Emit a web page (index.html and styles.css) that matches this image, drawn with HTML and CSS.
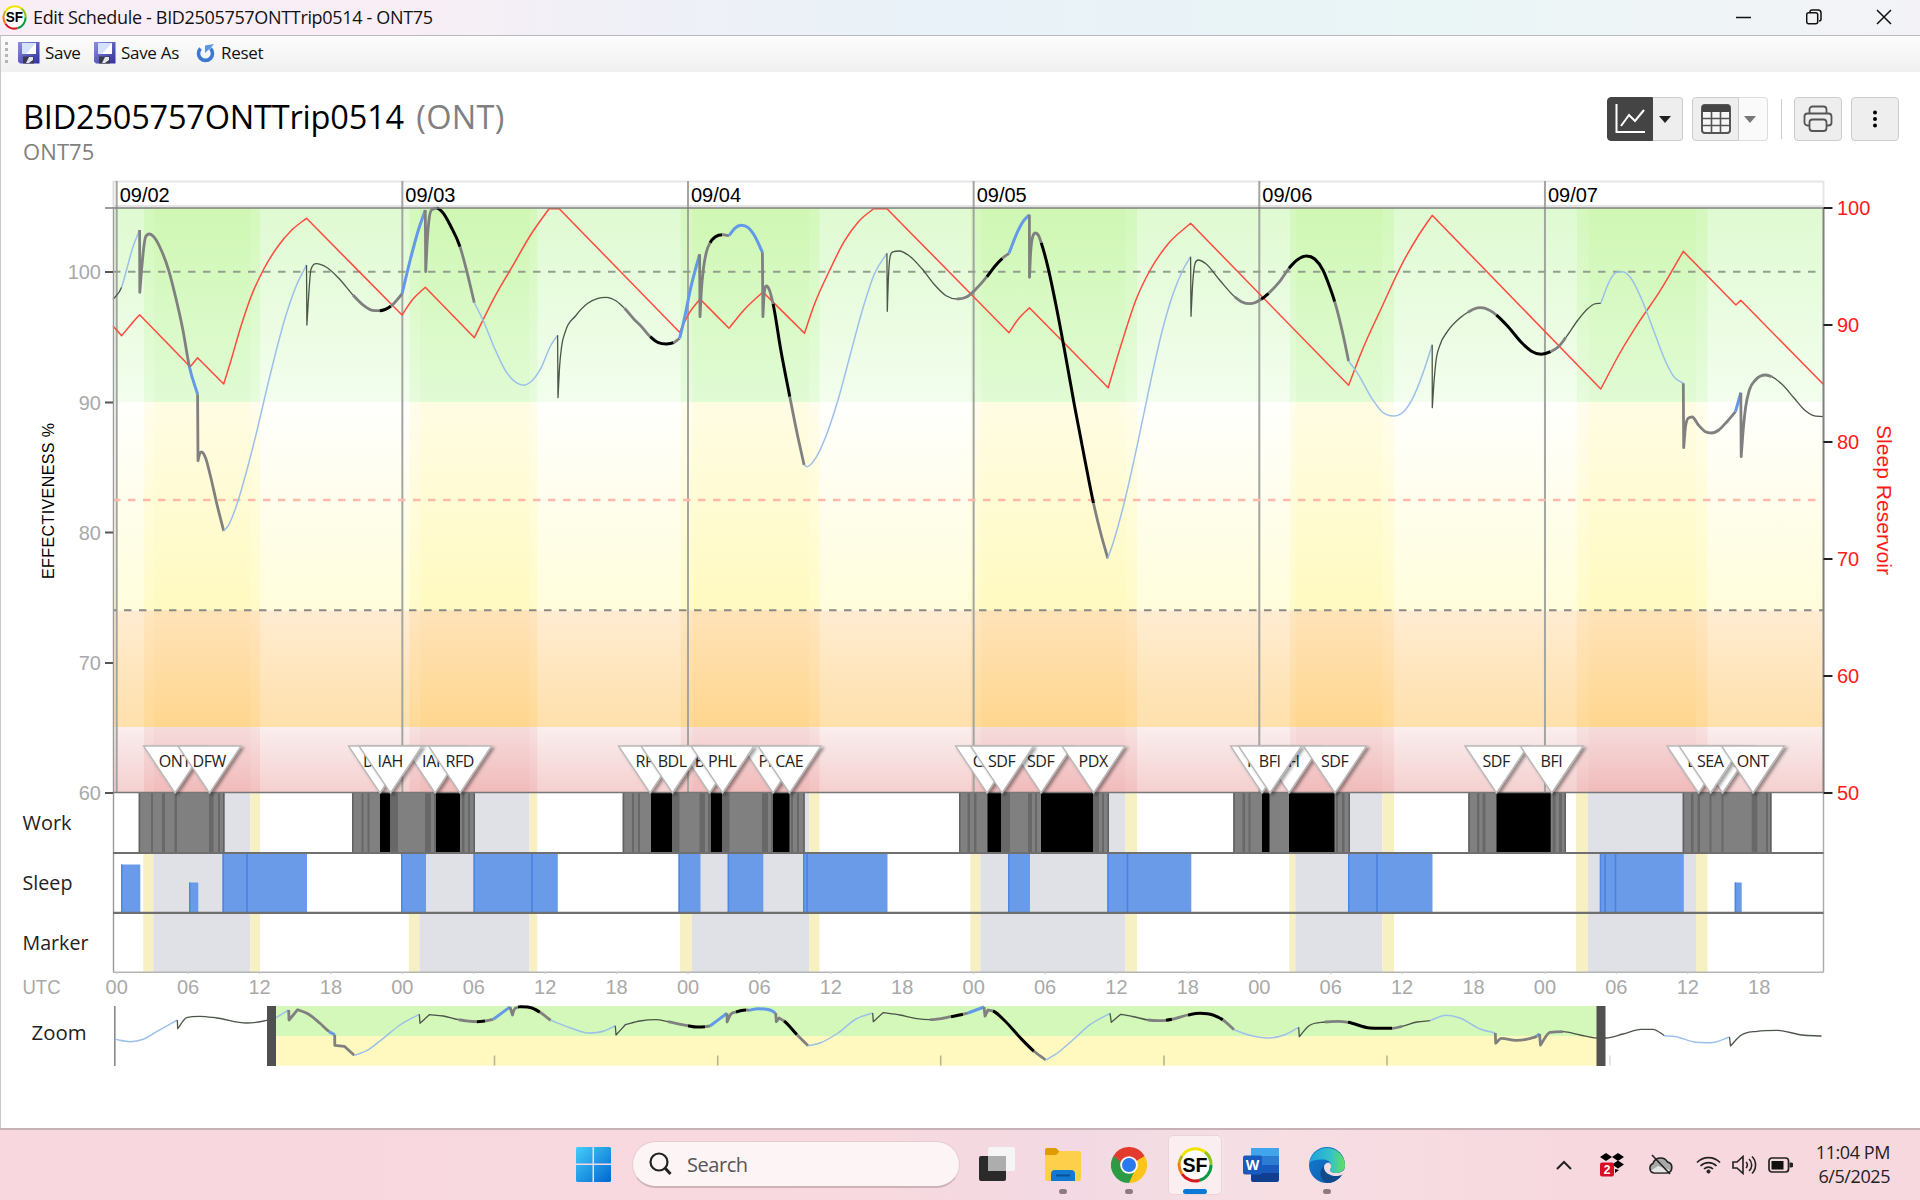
FILE: index.html
```html
<!DOCTYPE html>
<html lang="en">
<head>
<meta charset="utf-8">
<title>Edit Schedule - BID2505757ONTTrip0514 - ONT75</title>
<link rel="stylesheet" href="styles.css">
</head>
<body>
<svg class="defs" width="0" height="0">
  <defs>
    <symbol id="sf" viewBox="0 0 36 36">
      <circle cx="18" cy="18" r="17.5" fill="#fff"/>
      <g fill="none" stroke-width="3">
        <path d="M5 9A16 16 0 0 1 28 5" stroke="#f2e400"/>
        <path d="M28 5A16 16 0 0 1 34 18" stroke="#8fc31f"/>
        <path d="M34 18A16 16 0 0 1 22 33.500" stroke="#0a9a44"/>
        <path d="M22 33.500A16 16 0 0 1 5 27" stroke="#d9161c"/>
        <path d="M5 27A16 16 0 0 1 2.200 16" stroke="#ee7d1a"/>
        <path d="M2.200 16A16 16 0 0 1 5 9" stroke="#b8b414"/>
      </g>
      <text x="18" y="25" class="sf-text" text-anchor="middle" textLength="25" lengthAdjust="spacingAndGlyphs">SF</text>
    </symbol>
    <linearGradient id="disk" x1="0" y1="0" x2="1" y2="1">
      <stop offset="0" stop-color="#8f8fe0"/><stop offset="1" stop-color="#30309a"/>
    </linearGradient>
    <symbol id="floppy" viewBox="0 0 22 22">
      <path d="M0 0H21.500V21.500H2L0 19.500Z" fill="url(#disk)"/>
      <rect x="4" y="1" width="14" height="11" fill="#d4e2fb"/>
      <path d="M18 1V12H8z" fill="#fff"/>
      <rect x="5" y="14.500" width="11" height="7" fill="#3a3a4a"/>
      <path d="M11 15h4v3l-4 3h-3z" fill="#dfe4ee"/>
    </symbol>
  </defs>
</svg>

<header class="titlebar">
  <svg class="app-icon" width="25" height="25"><use href="#sf"/></svg>
  <span class="title">Edit Schedule - BID2505757ONTTrip0514 - ONT75</span>
  <div class="win-controls">
    <svg width="16" height="16"><path d="M0 8.500H15" /></svg>
    <svg width="16" height="16"><rect x=".7" y="3.700" width="11" height="11" rx="2"/><path d="M4 3.500V3a2 2 0 0 1 2-2h6a3 3 0 0 1 3 3v6a2 2 0 0 1-2 2"/></svg>
    <svg width="16" height="16"><path d="M1 1L15 15M15 1L1 15"/></svg>
  </div>
</header>

<nav class="toolbar">
  <span class="grip"></span>
  <button class="tool save"><svg width="22" height="22"><use href="#floppy"/></svg>Save</button>
  <button class="tool save-as"><svg width="22" height="22"><use href="#floppy"/></svg>Save As</button>
  <button class="tool reset"><svg width="19" height="20" viewBox="0 0 19 20"><path d="M4.500 5.500A7 7 0 1 0 14.500 5.500" fill="none" stroke="#3c78cf" stroke-width="3.600"/><path d="M9 10V2.500L18 1l-3 3.500z" fill="#5a96e4"/></svg>Reset</button>
</nav>

<main class="content">
  <section class="heading">
    <div>
      <h1><span class="name">BID2505757ONTTrip0514</span> <span class="base">(ONT)</span></h1>
      <p class="scenario">ONT75</p>
    </div>
    <div class="actions">
      <div class="split">
        <button class="btn dark"><svg width="32" height="32" viewBox="0 0 32 32"><path d="M2.500 1V29H31M7 23l8-11 6 6 9-11" fill="none" stroke="#fff" stroke-width="2"/></svg></button>
        <button class="btn caret"><svg width="12" height="7"><path d="M0 0H12L6 7z" fill="#222"/></svg></button>
      </div>
      <div class="split">
        <button class="btn table"><svg width="30" height="30" viewBox="0 0 30 30"><rect x="1" y="1" width="28" height="28" rx="3" fill="#f6f6f6" stroke="#555" stroke-width="2"/><path d="M1 8V4a3 3 0 0 1 3-3H26a3 3 0 0 1 3 3V8z" fill="#444"/><path d="M1 14.500H29M1 21.500H29M10.500 8V29M19.500 8V29" stroke="#555" stroke-width="1.600"/></svg></button>
        <button class="btn caret faded"><svg width="12" height="7"><path d="M0 0H12L6 7z" fill="#777"/></svg></button>
      </div>
      <span class="divider"></span>
      <button class="btn single"><svg width="30" height="28" viewBox="0 0 30 28" fill="#eee" stroke="#555" stroke-width="1.800"><path d="M6.500 9V4.500a3 3 0 0 1 3-3h11a3 3 0 0 1 3 3V9"/><rect x="1.500" y="8.500" width="27" height="12" rx="3"/><rect x="6.500" y="14.500" width="17" height="11.500" rx="3"/></svg></button>
      <button class="btn single"><svg width="6" height="18"><circle cx="3" cy="2.500" r="2"/><circle cx="3" cy="9" r="2"/><circle cx="3" cy="15.500" r="2"/></svg></button>
    </div>
  </section>

  <svg id="chart" class="chart" width="1920" height="953" viewBox="0 175 1920 953">
    <defs>
      <linearGradient id="g0" x2="0" y2="1"><stop offset="0" stop-color="#dffad2"/><stop offset="1" stop-color="#f3feee"/></linearGradient>
      <linearGradient id="g1" x2="0" y2="1"><stop offset="0" stop-color="#fffffd"/><stop offset="1" stop-color="#fffddb"/></linearGradient>
      <linearGradient id="g2" x2="0" y2="1"><stop offset="0" stop-color="#ffecd2"/><stop offset="1" stop-color="#ffe0ab"/></linearGradient>
      <linearGradient id="g3" x2="0" y2="1"><stop offset="0" stop-color="#faeeee"/><stop offset="1" stop-color="#f5cfcf"/></linearGradient>
      <linearGradient id="n0" x2="0" y2="1"><stop offset="0" stop-color="#cff7b3"/><stop offset="1" stop-color="#e1fbd5"/></linearGradient>
      <linearGradient id="n1" x2="0" y2="1"><stop offset="0" stop-color="#fffce4"/><stop offset="1" stop-color="#fffac0"/></linearGradient>
      <linearGradient id="n2" x2="0" y2="1"><stop offset="0" stop-color="#ffe3b8"/><stop offset="1" stop-color="#ffd68e"/></linearGradient>
      <linearGradient id="n3" x2="0" y2="1"><stop offset="0" stop-color="#f6dbdb"/><stop offset="1" stop-color="#f1baba"/></linearGradient>
      <filter id="shadow" x="-20%" y="-20%" width="150%" height="150%"><feDropShadow dx="2.500" dy="2" stdDeviation="1.500" flood-opacity=".38"/></filter>
    </defs>
  </svg>
</main>

<footer class="taskbar">
  <svg class="start" width="35" height="35"><defs><linearGradient id="win" x2="1" y2="1"><stop stop-color="#45cdfb"/><stop offset="1" stop-color="#0067cf"/></linearGradient></defs><path fill="url(#win)" d="M1 0H16.500V16.500H0V1zM18 0H34L35 1V16.500H18zM0 18H16.500V35H1L0 34zM18 18H35V34L34 35H18z"/></svg>
  <div class="search">
    <svg width="24" height="24"><circle cx="11" cy="10" r="8.500" fill="none" stroke="#222" stroke-width="2.200"/><path d="M17 16l5.500 6" stroke="#222" stroke-width="3"/></svg>
    <span>Search</span>
  </div>
  <div class="apps">
    <div class="app"><svg width="36" height="36"><rect y="9" width="27" height="25" rx="2" fill="#2a2a2a"/><rect x="9" y="0" width="27" height="24" rx="2" fill="#f5f5f5"/><rect x="9" y="9" width="18" height="15" fill="#adadad"/></svg></div>
    <div class="app run"><svg width="36" height="36"><path d="M0 3a2 2 0 0 1 2-2H11l4 4-4 4H0z" fill="#dd9d00"/><path d="M0 8H11l4-4H34a2 2 0 0 1 2 2V32a2 2 0 0 1-2 2H2a2 2 0 0 1-2-2z" fill="#fdcf4a"/><path d="M6 34V27a4 4 0 0 1 4-4H26a4 4 0 0 1 4 4V34z" fill="#1279d0"/><path d="M11 28.500H25" stroke="#0b4f94" stroke-width="2"/></svg></div>
    <div class="app run"><svg width="36" height="36" viewBox="0 0 36 36"><path d="M18 18L2.400 9A18 18 0 0 1 33.600 9z" fill="#e33b2e"/><path d="M18 18L18 36A18 18 0 0 1 2.400 9z" fill="#2b9b46"/><path d="M18 18L33.600 9A18 18 0 0 1 18 36z" fill="#fcc419"/><path d="M2.400 9L10.200 22.500 18 18zM33.600 9H18V18z" fill="#e33b2e"/><path d="M2.400 9L10.200 22.500 11 16z" fill="#2b9b46"/><path d="M25.800 22.500L18 36 14 26z" fill="#fcc419"/><path d="M10.200 22.500L18 36 23 25z" fill="#2b9b46"/><circle cx="18" cy="18" r="8.800" fill="#fff"/><circle cx="18" cy="18" r="7" fill="#2a79ee"/></svg></div>
    <div class="app active"><svg width="36" height="36"><use href="#sf"/></svg></div>
    <div class="app"><svg width="36" height="34"><rect x="8" width="28" height="34" rx="2" fill="#103f91"/><path d="M8 2a2 2 0 0 1 2-2H34a2 2 0 0 1 2 2V9H8z" fill="#41a5ee"/><rect x="8" y="8" width="28" height="9" fill="#2b7cd3"/><rect x="8" y="17" width="28" height="8" fill="#185abd"/><rect y="7.500" width="19" height="19" rx="2" fill="#185abd"/><text x="9.500" y="22" text-anchor="middle" class="word-text">W</text></svg></div>
    <div class="app run"><svg width="36" height="36" viewBox="0 0 36 36"><defs><linearGradient id="e1" x2="1"><stop stop-color="#1fa2e0"/><stop offset=".6" stop-color="#35c1c9"/><stop offset="1" stop-color="#62e25a"/></linearGradient><linearGradient id="e2" x2="1" y2="1"><stop stop-color="#0f7fd4"/><stop offset="1" stop-color="#0f56a8"/></linearGradient></defs><circle cx="18" cy="18" r="18" fill="url(#e2)"/><path d="M.3 16A18 18 0 0 1 36 18C36 24 31 26 27 26 22 26 20 24 21.500 21.500 23 19 22 13 15 12.500 9 12 3 13 .3 16z" fill="url(#e1)"/><path d="M15 19c-1 4 3 10 10 10 4 0 7-1.500 8.500-2.500C30 33 24 36 18 36c-7-2-9-13-3-17z" fill="#114a8b"/><path d="M15 20c0-3 3-5 5.500-4 2 1.500 2 4 1 5.500C20 24 22 26 27 26c4 0 8-1.500 9-5l0 4-2.500 2.500C31 29 27 29.500 23 28.500 18 27 15 24 15 20z" fill="#f3dce1"/></svg></div>
  </div>
  <div class="tray">
    <svg class="chevron" width="16" height="10"><path d="M1 9L8 2l7 7" fill="none" stroke="#222" stroke-width="2"/></svg>
    <svg class="dropbox" width="24" height="24"><path d="M6 0l6 4-6 4-6-4zM18 0l6 4-6 4-6-4zM18 7.500l6 4-6 4-6-4zM15 16l4 1-4 3z" fill="#000"/><rect y="9.500" width="14" height="14" rx="2" fill="#d80e26"/><text x="7" y="21" text-anchor="middle" class="badge">2</text></svg>
    <svg class="cloud" width="25" height="22"><path d="M6 19a5 5 0 0 1-1-9.500A8 8 0 0 1 19.500 8 5.600 5.600 0 0 1 19 19z" fill="#a9a9a9" stroke="#222" stroke-width="1.600"/><path d="M3 16.500l7-4.500 12 4-3 2.200H6z" fill="#e4e4e4"/><path d="M4 1L22 20" stroke="#222" stroke-width="1.600"/></svg>
    <svg class="wifi" width="25" height="19" fill="none" stroke="#222" stroke-width="1.700"><path d="M1 7.500a16 16 0 0 1 23 0M4.500 11a11.300 11.300 0 0 1 16 0M8 14a6.500 6.500 0 0 1 9 0"/><circle cx="12.500" cy="16.500" r="1.600" fill="#222" stroke-width="1"/></svg>
    <svg class="volume" width="25" height="20" fill="none" stroke="#222" stroke-width="1.600"><path d="M1 7H5L11 1.500V18.500L5 13H1zM14 7a4 4 0 0 1 0 6M17 4a8 8 0 0 1 0 12M20 1.500a12 12 0 0 1 0 17"/></svg>
    <svg class="battery" width="25" height="16"><rect x="1" y="1" width="19.500" height="14" rx="3" fill="none" stroke="#222" stroke-width="1.700"/><rect x="3.500" y="4" width="12" height="8.500" fill="#111"/><path d="M21.500 5.500h1.500a1.500 1.500 0 0 1 0 5h-1.500z" fill="#222"/></svg>
    <div class="clock"><span class="time">11:04 PM</span><span class="date">6/5/2025</span></div>
  </div>
</footer>
<script src="chart.js"></script>
</body>
</html>
```
FILE: styles.css
```css
* { box-sizing: border-box; }
body {
  margin: 0;
  width: 1920px;
  height: 1200px;
  overflow: hidden;
  display: flex;
  flex-direction: column;
  background: #fff;
  color: #111;
  font-family: "Open Sans", "Noto Sans", sans-serif;
}
button { font: inherit; letter-spacing: inherit; color: inherit; border: 0; background: none; padding: 0; }
svg { display: block; flex: none; }
.defs { position: absolute; }
.sf-text { font: 700 21px "Liberation Sans", Arial, sans-serif; fill: #000; }
.word-text { font: 700 14px "Open Sans", sans-serif; fill: #fff; }
.badge { font: 700 12px "Liberation Sans", sans-serif; fill: #fff; }

/* title bar */
.titlebar {
  height: 35px;
  display: flex;
  align-items: center;
  padding: 0 28px 1px 2px;
  background: linear-gradient(90deg, #f9eef5 0, #f9eef5 20%, #f0f0f7 32%, #e8f2f8 50%, #eaf5f6 75%, #f3f3f7 100%);
}
.title { margin-left: 6px; font-size: 18px; letter-spacing: -.33px; }
.win-controls { margin-left: auto; display: flex; gap: 54px; }
.win-controls svg { fill: none; stroke: #111; stroke-width: 1.5; }

/* toolbar */
.toolbar {
  height: 37px;
  display: flex;
  align-items: center;
  padding-bottom: 3px;
  border-top: 1px solid #bbb9c0;
  border-left: 1px solid #c8c8c8;
  background: linear-gradient(#fcfcfc, #f0f0f0);
  font-size: 17px;
  letter-spacing: -.15px;
}
.grip { width: 3px; height: 22px; margin-left: 4px; background: repeating-linear-gradient(#b5b5b5 0 3px, transparent 3px 6px); }
.tool { display: flex; align-items: center; gap: 5px; }
.save { margin-left: 10px; width: 62px; letter-spacing: -.3px; }
.save-as { margin-left: 14px; width: 89px; letter-spacing: -.3px; }
.reset { margin-left: 13px; gap: 6px; letter-spacing: -.3px; }

/* heading */
.content { flex: none; height: 1056px; border-left: 1px solid #c8c8c8; }
.heading { height: 103px; display: flex; justify-content: space-between; padding: 25px 21px 0 22px; }
h1 { margin: -1px 0 0; font-size: 32.5px; font-weight: 400; line-height: 42px; white-space: nowrap; color: #000; }
.name { letter-spacing: -.2px; }
.base { color: #808080; margin-left: 4px; letter-spacing: .3px; }
.scenario { margin: 0; font-size: 22px; line-height: 26px; letter-spacing: .1px; color: #808080; }
.actions { display: flex; align-items: flex-start; }
.split { display: flex; margin-right: 9px; }
.btn { height: 44px; display: flex; align-items: center; justify-content: center; background: #eee; border: 1px solid #ccc; border-radius: 4px; }
.dark { width: 46px; background: #444; border-color: #444; border-radius: 4px 0 0 4px; }
.table { width: 47px; border-radius: 4px 0 0 4px; }
.caret { width: 30px; padding-right: 6px; border-left: 0; border-radius: 0 4px 4px 0; }
.faded { width: 29px; background: #fafafa; border-color: #ddd; }
.divider { width: 1px; height: 40px; margin: 2px 12px 0 4px; background: #ccc; }
.single { width: 48px; }
.single + .single { margin-left: 9px; }

/* chart */
.chart { margin-left: -1px; }
.chart text { font: 20px "Liberation Sans", Arial, sans-serif; }
.chart .lane { font: 20.5px "Open Sans", sans-serif; fill: #222; }
.chart .axis { fill: #a9a9a9; }
.chart .reservoir { fill: #ff1a1a; }
.chart .pin-text { font: 16px "Open Sans", sans-serif; fill: #222; }
.chart .axis-title { font-size: 16px; fill: #000; }
.curve { fill: none; stroke-linejoin: round; }
.curve.t { stroke: #4c554a; stroke-width: 1.3; }
.curve.b { stroke: #9cc0ea; stroke-width: 1.5; }
.curve.g { stroke: #808080; stroke-width: 2.8; }
.curve.k { stroke: #000; stroke-width: 3; }
.curve.B { stroke: #6499ea; stroke-width: 3; }
.curve.r { stroke: #ff4a3d; stroke-width: 1.5; }

/* taskbar */
.taskbar {
  height: 72px;
  display: flex;
  align-items: center;
  padding: 0 30px 1px 576px;
  border-top: 2px solid #c6b1b6;
  background: linear-gradient(90deg, #f8d8de 0, #f8d9df 45%, #f2d9e3 56%, #f6dfe4 65%, #f7d8df 82%, #f7d8df 100%);
}
.search { width: 328px; height: 47px; margin-left: 21px; display: flex; align-items: center; padding-left: 15px; border: 1px solid #e6ccd2; border-bottom: 2px solid #cdb3b9; border-radius: 24px; background: #fdf4f6; font-size: 20px; color: #555; letter-spacing: -.45px; }
.search span { margin-left: 15px; }
.apps { display: flex; gap: 12px; margin-left: 10px; }
.app { position: relative; width: 54px; height: 60px; display: flex; align-items: center; justify-content: center; border-radius: 5px; }
.run::after, .active::after { content: ""; position: absolute; bottom: 1px; width: 8px; height: 5px; border-radius: 3px; background: #8c7b80; }
.active { background: #fbeef1; border: 1px solid #ead3d9; box-shadow: 2px 0 0 #f6e3e7; }
.active::after { width: 24px; bottom: 0; background: #0a78d6; }
.tray { margin-left: auto; display: flex; align-items: center; }
.dropbox { margin-left: 28px; }
.cloud { margin-left: 24px; }
.wifi { margin-left: 23px; }
.volume { margin-left: 11px; }
.battery { margin-left: 11px; }
.clock { width: 97px; margin-top: -2px; display: flex; flex-direction: column; align-items: flex-end; font-size: 18px; line-height: 24px; letter-spacing: -.42px; color: #222; }
```
FILE: chart.js
```js
const NS = 'http://www.w3.org/2000/svg';
const chart = document.getElementById('chart');

function add(tag, attrs, text) {
  const el = document.createElementNS(NS, tag);
  for (const k in attrs) el.setAttribute(k, attrs[k]);
  if (text !== undefined) el.textContent = text;
  chart.appendChild(el);
  return el;
}
const rect = (x, y, x2, y2, fill) => add('rect', { x, y, width: x2 - x, height: y2 - y, fill });
const line = (x1, y1, x2, y2, stroke, w = 1, extra = {}) =>
  add('line', { x1, y1, x2, y2, stroke, 'stroke-width': w, ...extra });

// Monotone slopes for one smooth run of points.
function slopes(p) {
  const n = p.length, d = [], m = [];
  for (let i = 0; i < n - 1; i++) d.push((p[i + 1][1] - p[i][1]) / ((p[i + 1][0] - p[i][0]) || 0.01));
  for (let i = 0; i < n; i++) {
    if (i === 0) m.push(d[0]);
    else if (i === n - 1) m.push(d[n - 2]);
    else if (d[i - 1] * d[i] <= 0) m.push(0);
    else {
      const a = p[i][0] - p[i - 1][0], b = p[i + 1][0] - p[i][0];
      const mean = (d[i - 1] * b + d[i] * a) / (a + b);
      const cap = 3 * Math.min(Math.abs(d[i - 1]), Math.abs(d[i]));
      m.push(Math.sign(mean) * Math.min(Math.abs(mean), cap));
    }
  }
  return m;
}

// Letters switch the pen, "|" breaks the tangent at the last point.
function curve(src) {
  const runs = [[]];
  let pen = 't', last = null;
  for (const tok of src.trim().split(/\s+/)) {
    if (tok === '|') runs.push([last]);
    else if (/^[a-zA-Z]$/.test(tok)) pen = tok;
    else {
      const [x, y] = tok.split(',').map(Number);
      last = [x, y, pen];
      runs[runs.length - 1].push(last);
    }
  }
  let d = '', cur = null;
  const flush = () => { if (d) add('path', { d, class: 'curve ' + cur }); d = ''; };
  for (const p of runs) {
    const m = slopes(p);
    for (let i = 1; i < p.length; i++) {
      const [x0, y0] = p[i - 1], [x1, y1, c] = p[i], h = (x1 - x0) / 3;
      if (c !== cur) { flush(); cur = c; d = `M${x0} ${y0}`; }
      d += h < 0.2 ? `L${x1} ${y1}` : `C${x0 + h} ${y0 + m[i - 1] * h} ${x1 - h} ${y1 - m[i] * h} ${x1} ${y1}`;
    }
  }
  flush();
}

const L = 113, R = 1823.5, TOP = 208, BOT = 793, DAY = 285.65, X0 = 116.7;
const zones = [TOP, 402, 610.5, 727, BOT];
const nights = [
  [144, 154, 250.5, 260], [409.5, 420, 529.5, 537.3], [680.7, 692.5, 809.3, 819.5],
  [971, 981, 1125.5, 1137], [1290, 1296, 1382.3, 1394], [1576.8, 1588.6, 1696, 1707.5]
];

// risk zones, darker through the night bands
for (let i = 0; i < 4; i++) {
  rect(L, zones[i], R, zones[i + 1], `url(#g${i})`);
  for (const [a, b, c, d] of nights) {
    rect(a, zones[i], d, zones[i + 1], `url(#n${i})`).setAttribute('opacity', .7);
    rect(b, zones[i], c, zones[i + 1], `url(#n${i})`);
  }
}
for (const [a, b, c, d] of nights) {
  rect(a - .7, BOT, b - .7, 972, '#f7f0c3');
  rect(b - .7, BOT, c, 972, '#dfe1e6');
  rect(c, BOT, d, 972, '#f7f0c3');
}

// frame and days
line(L, 181.5, R, 181.5, '#e6e6e6', 2);
line(L + .5, 181, L + .5, 208, '#ddd', 2);
line(R, 181, R, 208, '#e6e6e6', 2);
line(L, 206, R, 206, '#e4e4e4', 2);
for (let i = 0; i < 6; i++) {
  const x = X0 + DAY * i;
  line(x, 181, x, BOT, '#a3a5a0', 2);
  add('text', { x: x + 3, y: 202 }, '09/0' + (i + 2));
}
line(L, 271.7, R, 271.7, '#939f8e', 2, { 'stroke-dasharray': '7.5 7.5' });
line(L, 500, R, 500, '#ffb9ab', 2.600, { 'stroke-dasharray': '7.5 7.5' });
line(L, 610.3, R, 610.3, '#8a8a84', 2, { 'stroke-dasharray': '7.5 7.5', 'stroke-dashoffset': 4 });

curve(`r 113,326 121.6,335.7 | 130.6,325 139.6,314.7 | 190.2,366.7 | 197.6,357.7 | 223.7,384 |
 230.6,361.7 240.8,326.7 251,296.7 263.3,270 277.6,246.7 291.8,230 306.5,218.3 | 402,315 | 412.2,300 425.3,287.3 |
 474.3,337.7 | 493.9,298.3 512.2,266.7 530.6,235 549,208.7 | 559.2,208.7 | 679.6,332.3 | 689,313.3 700,299 |
 729,328.3 | 744,310 762.9,292 | 804.5,333.3 | 813.5,306.7 829.8,270 844.1,241.7 858.4,221.7 873.5,208.7 |
 886.9,208.7 | 1009,332.7 | 1017.6,320 1029.4,307.7 | 1108.2,387.7 | 1121.6,343.3 1135.9,300 1150.2,270 1168.6,243.3 1190.6,223.3 |
 1348.6,385.3 | 1361.6,351.7 1382,306.7 1402.4,263.3 1418.8,235 1432.2,215.3 | 1600.8,389 |
 1618.8,355 1639.2,321.7 1659.6,291.7 1683.3,251.3 | 1735.9,305 | 1740.8,300.3 | 1823.3,384.3`);

curve(`t 113,299.3 121.6,287.3 b 126.5,270 132.6,248 139.6,230 | g 139.8,292.3 | 141.6,270 143.7,248 145.7,236.7 149.4,234
 155,238.3 161.2,250 168.6,270 175.5,296.7 182.9,330 189.4,366.7 B 197.6,394.3 | g 198,460.7 | 199.6,454 201.6,452 205.3,457.3
 210.2,475 217.1,505 223.7,531 | b 228.6,525 236.7,505 246.9,470 255.1,438.3 269.4,378 285.7,316 295.9,286.7 306.5,265 |
 t 306.9,325 | 308.6,296.7 311,269.3 316.3,263.7 326.5,267.3 338.8,278.3 353,295 g 365.3,306.7 372.2,310.3 379.6,310.7
 k 391,306 g 402,294 | B 410.2,260 418.4,230 425.3,210 | g 425.7,271.7 | 427.3,240 429.4,216.7 432.7,209.3 436.7,208.3
 k 442.9,212.7 451,226.7 460,246.7 g 467.3,273.3 474.3,302.7 | b 483.7,321.7 493.9,346.7 506.1,371.7 516.3,382.7 523.3,385.3
 530.6,382 540.8,368.3 551,345 557.6,335.3 | t 558,397.7 | 559.6,366.7 561.6,346.7 565.3,331.7 575.5,316 587.8,303.3
 598,298.3 606.1,297.3 616.3,301 624.5,308.3 g 634.7,320 640,325 650.2,336.7 k 658.4,342.7 666.5,344 673.5,342.7 g 679.6,338.3
 | B 684.1,320 691,286.7 699.6,254.3 | g 700,316.7 | 701.2,293.3 703.7,266.7 706.5,251.7 710.2,242.7 k 715.5,236.7 722.4,234.7
 g 729,235.7 | B 734.7,228.3 741.2,225.3 748.2,227.7 755.1,236.7 762.4,252.3 | g 762.9,316.7 | 764.1,295 766.5,286 769.4,290
 773.1,304 k 780.8,350 789.8,396.7 g 797.1,433.3 804.1,465 | b 807.3,466.7 815.5,458.3 825.7,436.7 838,400 850.2,355
 862.4,310 874.7,273.3 886.9,253.3 | t 887.3,311.3 | 888.2,283.3 889.8,258.3 893.1,251.8 899.2,251 909.4,256 921.6,268.3
 933.9,284 946.1,295.7 957.1,299 g 966.5,297 976.7,288.3 986.9,276.7 k 995.1,266 1002.4,258.3 g 1009,253.3 |
 B 1017.6,231.7 1023.7,220.7 1029.4,214.7 | g 1029.5,277.3 | 1030.6,253.3 1032.7,236.7 1035.5,233 1038.4,235.3 1041.2,242.7
 k 1048.2,268.3 1056.3,306.7 1064.5,350 1074.7,406.7 1084.9,460 1093.5,503.3 g 1101.2,535 1107.8,558.3 |
 b 1113.5,541.7 1125.7,496.7 1138,441.7 1150.2,383.3 1162.4,330 1172.7,295 1182.9,270 1190.6,256.7 | t 1191,316.3 |
 1192.7,283.3 1195.1,263.3 1198.4,260 1205.3,263.3 1219.6,280 1234.7,296.7 g 1242,302 1250.2,303.7 1261.2,299.3
 k 1268.6,293.3 g 1279.6,281.7 1289,268.3 k 1297.1,260 1306.5,256 1314.7,259 1322.9,270 1329,285 1334.7,301.7
 g 1342,330 1348.6,361 | b 1357.6,373.3 1371.8,398.3 1382,411.7 1393.5,416 1402.4,412.7 1412.7,398.3 1422.9,373.3 1432.2,344.7 |
 t 1432.3,407.7 | 1433.9,383.3 1435.9,361.7 1440,345 1447.3,331.7 1457.6,320 1467.8,312.3 g 1473.9,309 1480.8,307.7
 1489,310 1496.3,315 k 1508.6,327.3 1520.8,341.7 1531,351 1541.2,354.3 1550.6,351.7 g 1558.4,346.7 1565.7,337.7
 t 1578,320 1588.2,308.3 1594.3,304 1600.8,303.3 | b 1605.7,290 1611.4,277.7 1616.7,272.3 1622.9,271.7 1631,278.3
 1641.2,298.3 1653.5,330 1665.7,361.7 1673.9,376.7 1683.3,383.3 | g 1683.7,447.7 | 1685.3,428.3 1688.2,418.3 1692.2,417
 1698.4,425 1705.3,431.7 1711.8,433 1718.8,430 1726.9,421.7 1735.5,411.7 | B 1740.8,392.7 | g 1741.2,456.7 |
 1742.9,433.3 1745.7,406.7 1749.4,390 1755.5,380 1765.7,375 1771.8,376.7 t 1782,384.3 1794.3,398.3 1804.5,410 1812.7,415.3 1823.3,416.7`);

line(105, TOP, R, TOP, '#7c7c7c', 1.6);
line(L + .5, TOP, L + .5, 972, '#9a9a9a', 1.4);
line(R, TOP, R, BOT, '#808080', 2);
line(R, BOT, R, 972, '#aaa', 1.4);

// axes
[[100, 272], [90, 402.5], [80, 532.5], [70, 663], [60, 793]].forEach(([v, y]) => {
  line(105, y, L, y, '#555', 2);
  add('text', { x: 101, y: y + 7, class: 'axis', 'text-anchor': 'end' }, v);
});
[100, 90, 80, 70, 60, 50].forEach((v, i) => {
  const y = TOP + 117 * i;
  line(R, y, R + 9, y, '#222', 2);
  add('text', { x: 1837, y: y + 7, class: 'reservoir' }, v);
});
add('text', { transform: 'translate(54 579) rotate(-90)', class: 'axis-title', textLength: 156 }, 'EFFECTIVENESS %');
add('text', { transform: 'translate(1876.500 425) rotate(90)', class: 'reservoir', textLength: 150, lengthAdjust: 'spacingAndGlyphs' }, 'Sleep Reservoir');

// work lane: [start, end, black spans, dark strips]
const work = [
  [138.7, 224.5, [], [[151, 153], [162, 165], [174.5, 177], [209, 213.5], [218, 220]]],
  [352, 475, [[380, 390], [436, 460]], [[361.5, 363.5], [367.5, 369.5], [390, 398], [425, 431], [434, 436], [462, 464.5], [468, 470]]],
  [622.7, 804.7, [[651, 672], [711, 722], [773, 789.5]], [[632, 634], [638, 640], [672, 679.5], [699.5, 705], [708, 711], [722, 729.5], [762, 768], [771, 773], [791, 793], [797, 799]]],
  [959, 1109, [[987.5, 1001], [1041, 1093]], [[967.5, 970], [974, 976.5], [1001, 1010], [1028, 1032], [1035, 1037], [1093, 1099], [1102, 1104]]],
  [1233.3, 1350, [[1262, 1269.5], [1289, 1334.5]], [[1242.5, 1245], [1248.5, 1250.5], [1336, 1338], [1342, 1344.5]]],
  [1468.3, 1566, [[1496.5, 1550.7]], [[1477, 1479.3], [1482.5, 1485.5], [1552.7, 1555.5], [1559, 1562]]],
  [1682.7, 1771.5, [], [[1691, 1693.5], [1697.5, 1700], [1709.5, 1711.5], [1721.5, 1723.5], [1751.7, 1757.3], [1766, 1768]]]
];
for (const [a, b, flights, strips] of work) {
  rect(a, BOT, b, 853, '#808080');
  rect(a, BOT, a + 1.5, 853, '#606060');
  rect(b - 1.5, BOT, b, 853, '#606060');
  for (const [s, e] of strips) rect(s, BOT, e, 853, '#686868');
  for (const [s, e] of flights) rect(s, BOT, e, 853, '#000');
}

// sleep lane: [start, end, top, seams]
const sleep = [
  [121, 140.3, 864.5], [189, 198.3, 882.5], [222.5, 307, 853, 247], [401, 426, 853], [473.5, 557.8, 853, 532],
  [678.5, 700.5, 853], [727.7, 763.3, 853], [803, 887.5, 853, 807], [1008, 1030, 853], [1107.3, 1191.3, 853, 1127.5],
  [1348, 1432.5, 853, 1377], [1599.8, 1683.8, 853, 1605, 1615.5], [1734.7, 1741.7, 882.5]
];
for (const [a, b, top, ...seams] of sleep) {
  rect(a, top, b, 912, '#6a9be9');
  rect(a, top, a + 1.5, 912, '#4f86e2');
  for (const s of seams) rect(s - .8, top, s + .8, 912, '#4a82e0');
}
line(L, BOT - .5, R, BOT - .5, '#777', 1.6);
line(L, 853, R, 853, '#6f6f6f', 2.2);
line(L, 912.8, R, 912.8, '#6f6f6f', 2.2);
line(L, 972.3, R, 972.3, '#b5b5b5', 1.4);

// airport pins: departures lie under arrivals
function pin(x, code) {
  add('path', { d: `M${x - 31.5} 746H${x + 31.5}L${x} 793Z`, fill: '#fff', stroke: '#b9b9b9', 'stroke-width': 1.4, filter: 'url(#shadow)' });
  add('text', { x: x - .3, y: 767, class: 'pin-text', 'text-anchor': 'middle', 'letter-spacing': '-.4' }, code);
}
[[175, 'ONT'], [380, 'DFW'], [435, 'IAH'], [650, 'RFD'], [709.5, 'BDL'], [773, 'PHL'], [987, 'CAE'], [1041, 'SDF'],
 [1262, 'PDX'], [1289, 'BFI'], [1496.5, 'SDF'], [1698.5, 'BFI'], [1722.5, 'SEA']].forEach(p => pin(...p));
[[209.5, 'DFW'], [390.5, 'IAH'], [460, 'RFD'], [672.5, 'BDL'], [722.5, 'PHL'], [789.5, 'CAE'], [1002, 'SDF'], [1093.5, 'PDX'],
 [1270, 'BFI'], [1335, 'SDF'], [1551.7, 'BFI'], [1710.5, 'SEA'], [1753, 'ONT']].forEach(p => pin(...p));

// lane names and hours
[['Work', 22.5, 830, 49], ['Sleep', 22.5, 890, 50], ['Marker', 22.5, 950, 66], ['Zoom', 31.5, 1040, 55]].forEach(([t, x, y, w]) =>
  add('text', { x, y, class: 'lane', textLength: w, lengthAdjust: 'spacingAndGlyphs' }, t));
add('text', { x: 22.5, y: 993.5, class: 'axis', textLength: 38, lengthAdjust: 'spacingAndGlyphs' }, 'UTC');
for (let i = 0; i < 24; i++) {
  const x = X0 + i * DAY / 4;
  line(x, 972, x, 974, '#ccc', 1.4);
  add('text', { x, y: 993.5, class: 'axis', 'text-anchor': 'middle' }, ['00', '06', '12', '18'][i % 4]);
}

// overview strip
rect(276, 1006, 1597, 1036, '#d3f8b9');
rect(276, 1036, 1597, 1065.7, '#fff9c0');
line(114.8, 1006, 114.8, 1066, '#888', 1.6);
[494.5, 717.7, 940.7, 1164, 1387].forEach(x => line(x, 1055.5, x, 1065.5, '#b8b493', 1.6));
line(1610, 1055.5, 1610, 1065.5, '#ddd', 1.6);
curve(`b 115,1039.3 130,1041.7 143.3,1039.3 156.7,1031.7 177.3,1020 | t 177.7,1028.7 | 186.7,1017.7 200,1016.3 216.7,1018
 246.7,1023 266.7,1020.3 276,1017.7 | b 288.7,1010 | g 289,1020 | 297.7,1009.7 | 308.3,1014 320,1023.3 329.3,1031.7 B 334.7,1034.7 |
 g 334.8,1045.3 | 344.3,1046.3 | 354.3,1055.3 | b 366.7,1050.7 383.3,1038.3 400,1025 419.3,1014.3 | t 420,1023.3 |
 429.3,1014.7 | 443.3,1016 458.3,1019.7 g 476.7,1021.7 k 485,1021 g 493.3,1019.3 | B 510,1007 | g 512.5,1015 | 514,1010 518,1007 |
 k 521,1006.7 532,1008 540,1012.3 g 550.7,1020.3 | b 570,1027.7 588,1033 604,1031 615.3,1025.7 | t 616,1035 | 625.3,1024.7 |
 640,1021 656,1019.7 668,1021.7 g 688,1025.7 k 697,1027 705,1026.7 g 710,1026 | B 727,1013.3 | g 727.1,1022 | 730.7,1014.3 736,1012
 k 746,1010 g 749,1010.3 | B 758,1008.7 770,1010 775.7,1013 | g 776.3,1021.7 | 779,1018 | 784,1021 k 797,1034.7 g 808,1045.7 |
 b 820,1043 838,1033 856,1019 872.7,1013 | t 873.3,1021.7 | 883,1012.7 | 900,1015 915,1018.3 930,1019.7 g 951,1016.7 k 963,1014.3
 g 968,1013 | B 984,1007 | g 985,1016 | 988,1010 | 993,1011 k 1005,1021 1020,1037.5 1034,1051.3 g 1045.7,1060 |
 b 1055,1054.7 1072,1040.7 1090,1024.7 1110,1013.3 | t 1111.3,1022.3 | 1120.7,1014.3 | 1135,1017 1148,1020 g 1158,1020.7 1166,1020.3
 k 1172,1019.3 g 1188,1015 k 1200,1013.3 1213,1015 1223,1020 g 1234,1029.7 | b 1250,1035.3 1268,1038 1285,1034.7 1298.7,1027.3 |
 t 1299.3,1036.7 | 1309,1025.7 1325,1022 g 1338,1021.3 1348,1022.3 k 1370,1028 1392,1028.3 g 1402,1026.3 t 1417,1022 1430,1020.7 |
 b 1446,1015.3 1460,1018 1480,1029 1495.3,1033 | g 1495.7,1043.3 | 1501.5,1038.3 1516,1040.3 1530.5,1038.3 1537,1036 B 1539.5,1034 |
 g 1540.5,1045 | 1550,1032.3 1563,1031.7 t 1580,1035 1597,1038 1606,1038 1623,1034 1641,1029.3 1653,1029.3 1664.5,1035.7 |
 b 1676,1036.7 1696,1042.3 1711,1042.7 1729.5,1037 | t 1730.5,1046 | 1740,1036 1757,1031.3 1777,1030.3 1802,1035 1821.500,1036`);
rect(267, 1006, 276, 1066, '#505050');
rect(1596.5, 1006, 1605.5, 1066, '#505050');
```
